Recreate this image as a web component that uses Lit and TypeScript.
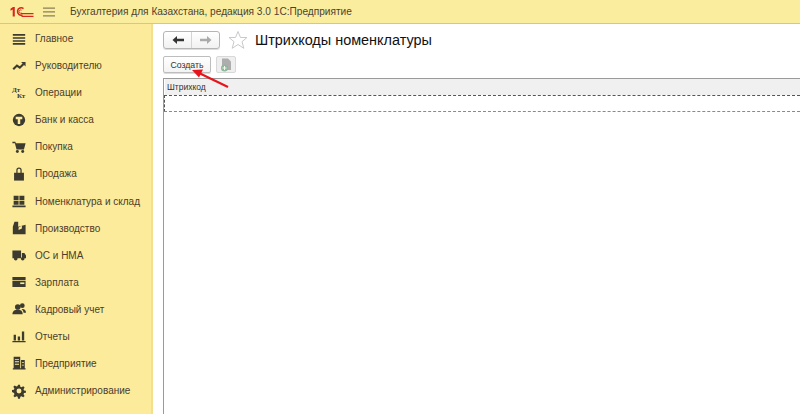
import { LitElement, html, css, svg } from "lit";
import { customElement } from "lit/decorators.js";

const icons: Record<string, unknown> = {
  home: svg`<path d="M1 2.500h15v2H1zM1 6.500h15v1.800H1zM1 10h15v1.800H1zM1 13.500h15v2H1z"/>`,
  chart: svg`<path d="M1.500 12.500 6 8l3.500 2.500L14 6" fill="none" stroke="currentColor" stroke-width="2.600"/><path d="M11 3.500h5.500V9z"/>`,
  ops: svg`<text x="0" y="7.500" font-family="Liberation Serif" font-size="8.500" font-weight="700">Дт</text><text x="6" y="15" font-family="Liberation Serif" font-size="8.500" font-weight="700">Кт</text>`,
  bank: svg`<circle cx="8.500" cy="8.500" r="7.500"/><path d="M4.500 4.500h8v3H10v6H7v-6H4.500z" fill="#fcec9c"/>`,
  cart: svg`<path d="M0.500 2h3.500l.7 2H16.500l-2 7.500H5.500L3.500 3.800H0.500z"/><circle cx="6.500" cy="14" r="1.800"/><circle cx="13" cy="14" r="1.800"/>`,
  bag: svg`<path d="M2.500 7h12v9.500h-12z"/><path d="M6 8V4a2.500 2.500 0 0 1 5 0v4" fill="none" stroke="currentColor" stroke-width="1.500"/>`,
  grid: svg`<path d="M2 2h6v5.500H2zM9 2h6v5.500H9zM2 8.500h6v4.500H2zM9 8.500h6v4.500H9zM0.500 14h16v2H0.500z"/>`,
  factory: svg`<path d="M3 1h4.500v6l9-2.500V16H1V7z"/><path d="M8 8 12 5.500V9l-4 2z" fill="#fcec9c"/>`,
  truck: svg`<path d="M0.500 3h10.500v9.500H0.500zM12 6h3l2 3v3.500h-5z"/><circle cx="4.500" cy="13" r="2.200"/><circle cx="13" cy="13" r="2.200"/>`,
  wallet: svg`<path d="M0.500 2.500h16v3.500h-16zM0.500 7h16v7.500h-16z"/><path d="M10 9h5v2h-5z" fill="#fcec9c"/>`,
  people: svg`<circle cx="7" cy="6" r="3.400"/><circle cx="12.500" cy="4.500" r="2.900"/><path d="M0.500 15c0-4 2.500-5.500 6.500-5.500S13 11 13 15z"/><path d="M11.500 8.500c3.500-.5 5.500 1 5.500 4.500h-3c-.3-1.800-1-3.500-2.500-4.500z"/>`,
  bars: svg`<path d="M2 7h2.800v7H2zM7 9h2.800v5H7zM12 3h2.800v11H12zM0.500 14.500h16V16H0.500z"/>`,
  office: svg`<path d="M2 1h8v14H2zM11 5h4.500v10H11zM1 15h15.500v1.500H1z"/><path d="M3.500 3.500h5v1h-5zM3.500 6.500h5v1h-5zM3.500 9.500h5v1h-5zM12 7.500h2.500v1H12zM12 10.500h2.500v1H12z" fill="#fcec9c"/>`,
  gear: svg`<path fill-rule="evenodd" d="M7.300 1h2.400l.4 2.300 1.500.6 2-1.300 1.700 1.700-1.300 2 .6 1.500 2.300.4v2.400l-2.300.4-.6 1.500 1.300 2-1.700 1.700-2-1.300-1.500.6-.4 2.300H7.300l-.4-2.300-1.500-.6-2 1.300-1.700-1.700 1.300-2-.6-1.500L0 9.700V7.300l2.300-.4.6-1.500-1.300-2 1.700-1.700 2 1.300 1.500-.6zM8.500 5.500a3 3 0 1 0 0 6 3 3 0 0 0 0-6z"/>`,
};

const menu: [string, string][] = [
  ["home", "Главное"],
  ["chart", "Руководителю"],
  ["ops", "Операции"],
  ["bank", "Банк и касса"],
  ["cart", "Покупка"],
  ["bag", "Продажа"],
  ["grid", "Номенклатура и склад"],
  ["factory", "Производство"],
  ["truck", "ОС и НМА"],
  ["wallet", "Зарплата"],
  ["people", "Кадровый учет"],
  ["bars", "Отчеты"],
  ["office", "Предприятие"],
  ["gear", "Администрирование"],
];

@customElement("app-root")
export class AppRoot extends LitElement {
  static styles = css`
    :host {
      display: flex;
      flex-direction: column;
      position: relative;
      width: 800px;
      height: 414px;
      overflow: hidden;
      background: #fff;
      font-family: "Liberation Sans", Arial, sans-serif;
      color: #4b3a2a;
    }
    .top {
      flex: none;
      height: 23px;
      display: flex;
      align-items: center;
      background: #fbed9e;
      border-bottom: 1px solid #d9c77a;
      font-size: 10.15px;
      color: #4c4232;
    }
    .logo {
      width: 24px;
      height: 12px;
      margin-left: 10px;
      flex: none;
    }
    .burger {
      width: 12px;
      height: 10px;
      margin-left: 9px;
      flex: none;
      color: #8a7f5e;
    }
    .title {
      margin-left: 15px;
      white-space: nowrap;
    }
    .body {
      flex: 1;
      display: flex;
      min-height: 0;
    }
    .side {
      flex: none;
      width: 151px;
      background: #fbeb9b;
      border-right: 2px solid #f4df8c;
      padding-top: 1px;
      display: flex;
      flex-direction: column;
    }
    .item {
      height: 27.08px;
      display: flex;
      align-items: center;
      font-size: 10px;
      color: #4d3d2c;
      white-space: nowrap;
    }
    .item svg {
      width: 14px;
      height: 14px;
      margin-left: 11.5px;
      margin-right: 9.5px;
      flex: none;
      fill: #3d3b30;
      color: #3d3b30;
      overflow: visible;
    }
    .main {
      flex: 1;
      min-width: 0;
      padding: 6px 0 0 10px;
      display: flex;
      flex-direction: column;
    }
    .head {
      display: flex;
      align-items: center;
      height: 20px;
    }
    .nav {
      display: flex;
      width: 55px;
      height: 16px;
      border: 1px solid #b5b5b5;
      border-radius: 3px;
      background: linear-gradient(#fff, #f1f1f1);
      box-shadow: 0 1px 0 #ddd;
    }
    .nav div {
      flex: 1;
      display: flex;
      align-items: center;
      justify-content: center;
    }
    .nav div:first-child {
      border-right: 1px solid #d4d4d4;
    }
    .nav svg {
      width: 14px;
      height: 10px;
    }
    .star {
      width: 20px;
      height: 20px;
      margin-left: 8px;
      flex: none;
    }
    h1 {
      margin: 0 0 0 7px;
      font-size: 14.45px;
      font-weight: 400;
      color: #111;
      white-space: nowrap;
    }
    .tools {
      display: flex;
      align-items: center;
      margin-top: 6px;
      height: 17px;
      gap: 5px;
    }
    .btn {
      width: 46px;
      height: 15px;
      border: 1px solid #bdbdbd;
      border-radius: 2px;
      background: linear-gradient(#fff, #f3f3f3);
      box-shadow: 0 1px 0 #ddd;
      font-size: 8.7px;
      line-height: 16px;
      text-align: center;
      color: #333;
    }
    .icon-btn {
      width: 18px;
      height: 15px;
      border: 1px solid #d8d8d8;
      border-radius: 2px;
      background: #efefef;
      display: flex;
      align-items: center;
      justify-content: center;
    }
    .icon-btn svg {
      width: 12px;
      height: 14px;
    }
    .table {
      flex: 1;
      margin-top: 5px;
      border-left: 1px solid #9a9a9a;
      border-top: 1px solid #9a9a9a;
    }
    .th {
      height: 16px;
      background: #f0f0f0;
      font-size: 8.5px;
      line-height: 17px;
      padding-left: 2px;
      color: #333;
      border-left: 1px solid #fff;
    }
    .row {
      height: 15px;
      border: 1px dashed #555;
      border-bottom-color: #8a8a8a;
      border-right: none;
    }
    .arrow {
      position: absolute;
      left: 185px;
      top: 55px;
      width: 50px;
      height: 40px;
    }
  `;

  render() {
    return html`
      <div class="top">
        <svg class="logo" viewBox="0 0 24 12">
          <path d="M0.500 2.800 3 1h1.800v9.500H2.700V3.500L0.500 4.800z" fill="#d8281e"/>
          <path d="M13.500 2.600a3.700 3.700 0 1 0-1 6.400" fill="none" stroke="#d8281e" stroke-width="1.600"/>
          <path d="M11.500 6.900a1.600 1.600 0 1 1 0-2.700" fill="none" stroke="#d8281e" stroke-width="1"/>
          <path d="M11 7.600h12.500M11.500 10.300h12" stroke="#d8281e" stroke-width="1.300"/>
        </svg>
        <svg class="burger" viewBox="0 0 12 10"><path d="M0 0.500h12v1.300H0zM0 4.300h12v1.300H0zM0 8.200h12v1.300H0z" fill="currentColor"/></svg>
        <span class="title">Бухгалтерия для Казахстана, редакция 3.0 1С:Предприятие</span>
      </div>
      <div class="body">
        <div class="side">
          ${menu.map(
            ([i, t]) => html`<div class="item"><svg viewBox="0 0 17 17">${icons[i]}</svg><span>${t}</span></div>`
          )}
        </div>
        <div class="main">
          <div class="head">
            <div class="nav">
              <div><svg viewBox="0 0 14 10"><path d="M6 1 1.500 5 6 9V6.200h7V3.800H6z" fill="#333"/></svg></div>
              <div><svg viewBox="0 0 14 10"><path d="M8 1l4.500 4L8 9V6.200H1V3.800h7z" fill="#aaa"/></svg></div>
            </div>
            <svg class="star" viewBox="0 0 20 20"><path d="M10 1.500l2.500 6h6.500l-5 4.200 1.800 6.600L10 14.500l-5.800 3.800 1.800-6.600-5-4.200h6.500z" fill="#fff" stroke="#c9c9c9"/></svg>
            <h1>Штрихкоды номенклатуры</h1>
          </div>
          <div class="tools">
            <div class="btn">Создать</div>
            <div class="icon-btn">
              <svg viewBox="0 0 12 14">
                <path d="M2 0.500h6l3 3V12H2z" fill="#adadad"/>
                <circle cx="4.500" cy="10" r="3.500" fill="#8fb898"/>
                <path d="M2.500 9.500h4v1h-4zM4 8h1v4H4z" fill="#f4f4f4"/>
              </svg>
            </div>
          </div>
          <div class="table">
            <div class="th">Штрихкод</div>
            <div class="row"></div>
          </div>
        </div>
      </div>
      <svg class="arrow" viewBox="0 0 50 40">
        <path d="M43 32 14 18" stroke="#e8141c" stroke-width="2.200" fill="none"/>
        <path d="M7 15l11-.5-4 8z" fill="#e8141c"/>
      </svg>
    `;
  }
}
